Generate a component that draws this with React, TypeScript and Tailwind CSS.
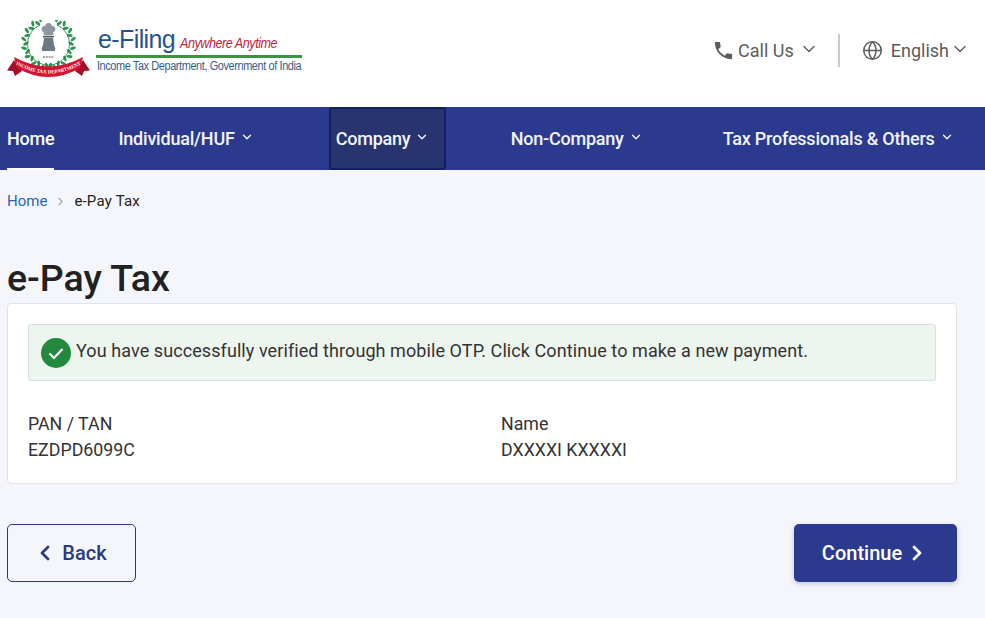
import { ChevronDown, ChevronLeft, ChevronRight, Globe } from "lucide-react";

function Logo() {
  const cx0 = 48.5;
  const cy0 = 43;
  const leaves = [];
  for (let i = 0; i < 16; i++) {
    const deg = 72 - i * 10.5; // from the top of the wreath to its bottom
    const a = (deg * Math.PI) / 180;
    const r = i % 2 === 0 ? 25 : 22.6;
    const x = cx0 + r * Math.cos(a);
    const y = cy0 - r * Math.sin(a);
    const tilt = 90 - deg + (i % 2 === 0 ? -28 : 28);
    leaves.push(<ellipse key={"r" + i} cx={x} cy={y} rx="1.5" ry="3" transform={`rotate(${tilt} ${x} ${y})`} fill="#2e9650" />);
    const xl = 2 * cx0 - x;
    leaves.push(<ellipse key={"l" + i} cx={xl} cy={y} rx="1.5" ry="3" transform={`rotate(${-tilt} ${xl} ${y})`} fill="#2e9650" />);
  }
  return (
    <svg width="84" height="60" viewBox="7 20 84 60" className="shrink-0">
      {leaves}
      <path d="M40 25a21 21 0 1 0 17 0" fill="none" stroke="#1f7a3f" strokeWidth="0.8" />
      <path d="M48.500 23c-2 0-3 1.300-3.200 2.700-2 .1-3.600 1.300-3.700 3.100-.1 1.700 1 3 2.200 3.500-.5 1.200-.3 2.400.7 3.200h8c1-.8 1.200-2 .7-3.200 1.200-.5 2.300-1.800 2.200-3.500-.1-1.800-1.700-3-3.700-3.100-.2-1.400-1.200-2.700-3.200-2.700z" fill="#8f979e" />
      <path d="M43 36h11v1.500H43z" fill="#4f5a64" />
      <path d="M44 38h9l1 7 1.500 4H41.500l1.500-4z" fill="#6c7a85" />
      <path d="M42 50h13" stroke="#3e4a55" strokeWidth="1.500" />
      <path d="M43 57h11" stroke="#555" strokeWidth="1.200" strokeDasharray="2 0.800" />
      <path d="M14 60L7 70.500l6 .5 2 5 7-5z" fill="#a50e27" />
      <path d="M83 60l7 10.500-6 .5-2 5-7-5z" fill="#a50e27" />
      <path d="M14 57Q48.500 76 83 57l-3 11Q48.500 86 17 68z" fill="#d5122f" />
      <path id="ribbonText" d="M16 64.500Q48.500 82.500 81 64.500" fill="none" />
      <text fontFamily="'Liberation Serif', serif" fontWeight="700" fontSize="5" fill="#ffffff">
        <textPath href="#ribbonText" startOffset="50%" textAnchor="middle">INCOME TAX DEPARTMENT</textPath>
      </text>
    </svg>
  );
}

function NavItem({ label, chevron = true, className = "" }: { label: string; chevron?: boolean; className?: string }) {
  return (
    <div className={`flex h-full items-center gap-[5px] text-[18px] font-medium tracking-[-0.22px] text-[#f2f4fb] ${className}`}>
      <span>{label}</span>
      {chevron && <ChevronDown size={14} strokeWidth={2.4} className="mt-[-3px]" />}
    </div>
  );
}

export default function App() {
  return (
    <div className="h-[618px] w-[985px] overflow-hidden bg-[#f5f6fb] font-['Roboto',sans-serif]">
      <header className="flex h-[107px] items-start justify-between bg-white pl-[7px] pr-[15px]">
        <div className="flex items-start pt-[20px]">
          <Logo />
          <div className="ml-[5px] flex w-[206px] flex-col pt-[7px] font-['Liberation_Sans',sans-serif]">
            <div className="flex h-[25px] items-baseline pl-[2px] whitespace-nowrap">
              <span className="text-[25px] leading-[25px] tracking-[-0.6px] text-[#24548f]">e-Filing</span>
              <span className="ml-[5px] origin-left scale-x-[0.87] text-[14.5px] italic tracking-[-0.55px] text-[#c0243d]">Anywhere Anytime</span>
            </div>
            <div className="mt-[3px] h-[3px] bg-[#3b9440]" />
            <div className="mt-[1px] origin-left scale-x-[0.91] pl-[1px] text-[12px] leading-[15px] tracking-[-0.43px] whitespace-nowrap text-[#35608a]">
              Income Tax Department, Government of India
            </div>
          </div>
        </div>
        <div className="flex items-center pt-[34px] text-[18px] text-[#5c5c5c]">
          <svg width="23" height="23" viewBox="0 0 24 24" fill="#5c5c5c" className="mr-[3px]">
            <path d="M6.620 10.790c1.440 2.830 3.760 5.140 6.590 6.590l2.200-2.200c.27-.27.67-.36 1.020-.24 1.120.37 2.330.57 3.570.57.550 0 1 .45 1 1V20c0 .550-.45 1-1 1C10.610 21 3 13.390 3 4c0-.550.45-1 1-1h3.500c.550 0 1 .45 1 1 0 1.250.2 2.450.57 3.570.11.350.03.740-.25 1.020l-2.200 2.200z" />
          </svg>
          <span>Call Us</span>
          <ChevronDown size={20} strokeWidth={1.6} className="ml-[5px] mt-[-4px]" />
          <div className="ml-[19px] mr-[22px] h-[33px] w-[2px] bg-[#c9c9c9]" />
          <Globe size={21} strokeWidth={1.7} className="mr-[8px]" />
          <span>English</span>
          <ChevronDown size={20} strokeWidth={1.6} className="ml-[1px] mt-[-4px]" />
        </div>
      </header>

      <nav className="flex h-[63px] items-stretch bg-[#2b3a8f] pl-[7px]">
        <div className="relative">
          <NavItem label="Home" chevron={false} className="text-white" />
          <div className="absolute bottom-0 left-0 h-[2px] w-full bg-white" />
        </div>
        <NavItem label="Individual/HUF" className="ml-[64px]" />
        <div className="ml-[75px] w-[117px] rounded-[3px] border-2 border-[#14205e] bg-[#28346f] pl-[5px]">
          <NavItem label="Company" className="text-[#dfe3f5]" />
        </div>
        <NavItem label="Non-Company" className="ml-[65px]" />
        <NavItem label="Tax Professionals & Others" className="ml-[80px]" />
      </nav>

      <main className="pl-[7px] pr-[28px]">
        <div className="flex h-[60px] items-center pt-[2px] text-[15px]">
          <span className="text-[#1f66b5]">Home</span>
          <ChevronRight size={13} strokeWidth={1.8} className="mx-[7px] text-[#666]" />
          <span className="tracking-[0.2px] text-[#222]">e-Pay Tax</span>
        </div>
        <h1 className="mt-[26px] text-[37.5px] font-medium leading-[44px] text-[#212121]">e-Pay Tax</h1>
        <section className="mt-[3px] h-[181px] rounded-[4px] border border-[#e2e4ea] bg-white px-[20px] pt-[20px]">
          <div className="flex h-[57px] items-center rounded-[3px] border border-[#d9dfe0] bg-[#edf5ef] pl-[12px]">
            <div className="flex h-[30px] w-[30px] items-center justify-center rounded-full bg-[#23893c]">
              <svg width="18" height="18" viewBox="0 0 18 18" fill="none" stroke="white" strokeWidth="2.2">
                <path d="M2.500 9.500l4.500 4.500 8.500-9" />
              </svg>
            </div>
            <span className="ml-[5px] mt-[-4px] text-[18px] tracking-[0.08px] text-[#333]">You have successfully verified through mobile OTP. Click Continue to make a new payment.</span>
          </div>
          <div className="mt-[30px] flex text-[17.8px] leading-[26px] text-[#333]">
            <div className="w-[473px]">
              <div>PAN / TAN</div>
              <div>EZDPD6099C</div>
            </div>
            <div>
              <div>Name</div>
              <div>DXXXXI KXXXXI</div>
            </div>
          </div>
        </section>
        <div className="mt-[40px] flex items-center justify-between">
          <button className="flex h-[58px] w-[129px] items-center justify-center gap-[5px] rounded-[5px] border border-[#2b3a7f] text-[20px] font-medium text-[#2b3a7f]">
            <ChevronLeft size={24} strokeWidth={2.8} className="ml-[-3px]" />
            Back
          </button>
          <button className="flex h-[58px] w-[163px] items-center justify-center gap-[3px] rounded-[5px] bg-[#2b3a8f] text-[20px] font-medium text-white shadow-[0_2px_5px_rgba(43,58,143,0.25)]">
            Continue
            <ChevronRight size={24} strokeWidth={2.8} />
          </button>
        </div>
      </main>
    </div>
  );
}
